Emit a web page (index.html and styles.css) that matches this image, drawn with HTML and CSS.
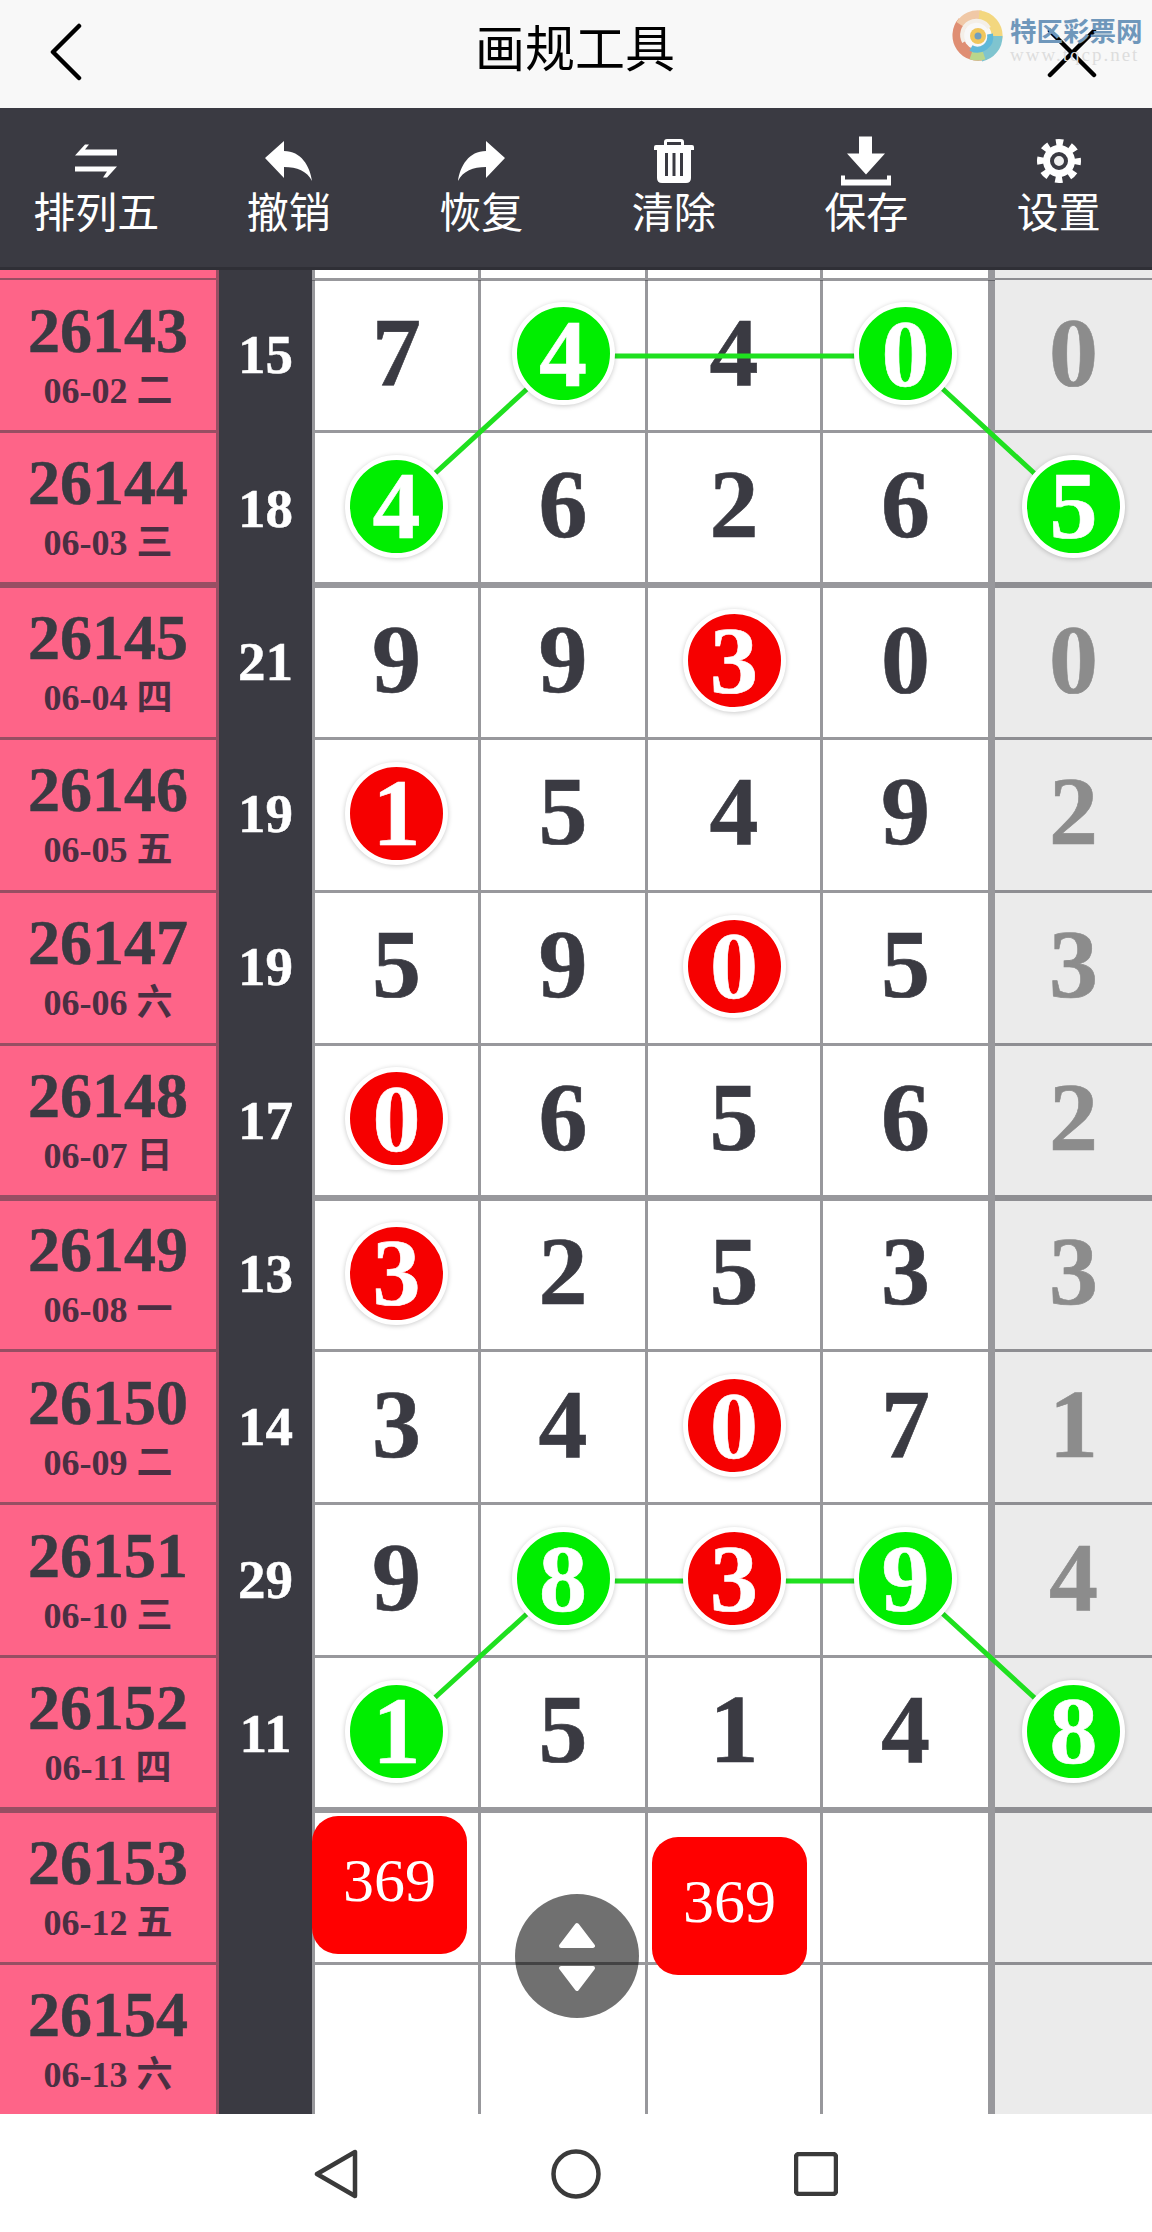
FILE: index.html
```html
<!DOCTYPE html>
<html lang="zh-CN">
<head>
  <meta charset="UTF-8" />
  <meta name="viewport" content="width=device-width, initial-scale=1.0"/>
  <title>画规工具</title>
  <link rel="stylesheet" href="styles.css">
</head>
<body>
  <header class="topbar">
    <svg class="back" width="34" height="58" viewBox="0 0 34 58"><path d="M30 3 L4 29 L30 55" /></svg>
    <h1>画规工具</h1>
    <svg class="close" width="50" height="50" viewBox="0 0 50 50"><path d="M3 3 L47 47 M47 3 L3 47" /></svg>
    <div class="mark">
      <svg class="swirl" width="52" height="52" viewBox="0 0 52 52">
        <g fill="none">
          <path d="M34 44 A20 20 0 0 1 12 12" stroke="#df8e73" stroke-width="11"/>
          <path d="M10 15 A20 20 0 0 1 30 6" stroke="#f0c8a6" stroke-width="11"/>
          <path d="M28 6 A20 20 0 0 1 46 28" stroke="#f3d77f" stroke-width="11"/>
          <path d="M46 26 A20 20 0 0 1 30 46" stroke="#7fc4cf" stroke-width="11"/>
          <path d="M33 45 A20 20 0 0 1 20 45" stroke="#b9d68c" stroke-width="9"/>
          <path d="M13 32 A14 14 0 0 1 38 18" stroke="#f4efe8" stroke-width="4"/>
          <path d="M39 24 A13 13 0 0 1 20 38" stroke="#5fb8d8" stroke-width="6"/>
        </g>
        <circle cx="27" cy="26" r="8" fill="#f0c65c"/>
        <circle cx="27" cy="26" r="3.500" fill="#6f9fc0"/>
      </svg>
      <div class="mark-text">
        <div class="mark-name">特区彩票网</div>
        <div class="mark-url">www.tqcp.net</div>
      </div>
    </div>
  </header>

  <nav class="toolbar">
    <div class="tool">
      <svg width="42" height="33" viewBox="0 0 42 33"><path d="M0 11 L10 0 L14 0 L10 5 L42 5 L42 11 Z M0 22 L42 22 L32 33 L28 33 L32 27 L0 27 Z" /></svg>
      <span>排列五</span>
    </div>
    <div class="tool">
      <svg width="47" height="40" viewBox="0 0 47 40"><path d="M0 17 L19 0 L19 10 C36 10 45 25 47 40 C42 30 32 26 19 26 L19 37 Z" /></svg>
      <span>撤销</span>
    </div>
    <div class="tool">
      <svg width="47" height="40" viewBox="0 0 47 40"><path d="M47 17 L28 0 L28 10 C11 10 2 25 0 40 C5 30 15 26 28 26 L28 37 Z" /></svg>
      <span>恢复</span>
    </div>
    <div class="tool">
      <svg width="42" height="44" viewBox="0 0 42 44">
        <path fill-rule="evenodd" d="M11 6 L11 3 Q11 0 14 0 L28 0 Q31 0 31 3 L31 6 L39 6 Q41 6 41 8 L41 11 L38 11 L38 39 Q38 44 33 44 L9 44 Q4 44 4 39 L4 11 L1 11 L1 8 Q1 6 3 6 Z M14 6 L28 6 L28 3 L14 3 Z M12 14 L12 37 L15 37 L15 14 Z M19.500 14 L19.500 37 L22.500 37 L22.500 14 Z M27 14 L27 37 L30 37 L30 14 Z" />
      </svg>
      <span>清除</span>
    </div>
    <div class="tool">
      <svg width="50" height="49" viewBox="0 0 50 49"><path d="M18 0 L31 0 L31 17 L44 17 L25 38 L6 17 L18 17 Z M0 39 L4 39 L4 43 L46 43 L46 39 L50 39 L50 49 L0 49 Z" /></svg>
      <span>保存</span>
    </div>
    <div class="tool">
      <svg class="gear" width="44" height="44" viewBox="0 0 44 44">
        <circle class="gear-teeth" cx="22" cy="22" r="18" />
        <circle class="gear-body" cx="22" cy="22" r="16" />
        <circle class="gear-ring" cx="22" cy="22" r="7" />
      </svg>
      <span>设置</span>
    </div>
  </nav>

  <main class="board">
    <div class="row cut">
      <div class="date"></div><div class="sum"></div><div class="num first"></div><div class="num"></div><div class="num"></div><div class="num fourth"></div><div class="num last"></div>
    </div>

    <div class="row">
      <div class="date"><b>26143</b><small>06-02 二</small></div>
      <div class="sum">15</div>
      <div class="num first">7</div>
      <div class="num"><i class="ball green">4</i></div>
      <div class="num">4</div>
      <div class="num fourth"><i class="ball green">0</i></div>
      <div class="num last">0</div>
    </div>
    <div class="row major">
      <div class="date"><b>26144</b><small>06-03 三</small></div>
      <div class="sum">18</div>
      <div class="num first"><i class="ball green">4</i></div>
      <div class="num">6</div>
      <div class="num">2</div>
      <div class="num fourth">6</div>
      <div class="num last"><i class="ball green">5</i></div>
    </div>
    <div class="row">
      <div class="date"><b>26145</b><small>06-04 四</small></div>
      <div class="sum">21</div>
      <div class="num first">9</div>
      <div class="num">9</div>
      <div class="num"><i class="ball red">3</i></div>
      <div class="num fourth">0</div>
      <div class="num last">0</div>
    </div>
    <div class="row">
      <div class="date"><b>26146</b><small>06-05 五</small></div>
      <div class="sum">19</div>
      <div class="num first"><i class="ball red">1</i></div>
      <div class="num">5</div>
      <div class="num">4</div>
      <div class="num fourth">9</div>
      <div class="num last">2</div>
    </div>
    <div class="row">
      <div class="date"><b>26147</b><small>06-06 六</small></div>
      <div class="sum">19</div>
      <div class="num first">5</div>
      <div class="num">9</div>
      <div class="num"><i class="ball red">0</i></div>
      <div class="num fourth">5</div>
      <div class="num last">3</div>
    </div>
    <div class="row major">
      <div class="date"><b>26148</b><small>06-07 日</small></div>
      <div class="sum">17</div>
      <div class="num first"><i class="ball red">0</i></div>
      <div class="num">6</div>
      <div class="num">5</div>
      <div class="num fourth">6</div>
      <div class="num last">2</div>
    </div>
    <div class="row">
      <div class="date"><b>26149</b><small>06-08 一</small></div>
      <div class="sum">13</div>
      <div class="num first"><i class="ball red">3</i></div>
      <div class="num">2</div>
      <div class="num">5</div>
      <div class="num fourth">3</div>
      <div class="num last">3</div>
    </div>
    <div class="row">
      <div class="date"><b>26150</b><small>06-09 二</small></div>
      <div class="sum">14</div>
      <div class="num first">3</div>
      <div class="num">4</div>
      <div class="num"><i class="ball red">0</i></div>
      <div class="num fourth">7</div>
      <div class="num last">1</div>
    </div>
    <div class="row">
      <div class="date"><b>26151</b><small>06-10 三</small></div>
      <div class="sum">29</div>
      <div class="num first">9</div>
      <div class="num"><i class="ball green">8</i></div>
      <div class="num"><i class="ball red">3</i></div>
      <div class="num fourth"><i class="ball green">9</i></div>
      <div class="num last">4</div>
    </div>
    <div class="row major">
      <div class="date"><b>26152</b><small>06-11 四</small></div>
      <div class="sum">11</div>
      <div class="num first"><i class="ball green">1</i></div>
      <div class="num">5</div>
      <div class="num">1</div>
      <div class="num fourth">4</div>
      <div class="num last"><i class="ball green">8</i></div>
    </div>
    <div class="row">
      <div class="date"><b>26153</b><small>06-12 五</small></div>
      <div class="sum"></div>
      <div class="num first"></div>
      <div class="num"></div>
      <div class="num"></div>
      <div class="num fourth"></div>
      <div class="num last"></div>
    </div>
    <div class="row">
      <div class="date"><b>26154</b><small>06-13 六</small></div>
      <div class="sum"></div>
      <div class="num first"></div>
      <div class="num"></div>
      <div class="num"></div>
      <div class="num fourth"></div>
      <div class="num last"></div>
    </div>

    <svg class="links" width="1152" height="1844" viewBox="0 0 1152 1844">
      <polyline points="396,239 563,86 907,86 1073,239" />
      <polyline points="396,1463 563,1311 907,1311 1073,1463" />
    </svg>

    <div class="tag tag-a">369</div>
    <div class="tag tag-b">369</div>

    <div class="float">
      <svg width="40" height="70" viewBox="0 0 40 70">
        <path d="M20 4 L36 25 L4 25 Z M4 47 L36 47 L20 68 Z" />
      </svg>
    </div>
  </main>

  <footer class="sysnav">
    <svg width="44" height="50" viewBox="0 0 44 50"><path d="M41 3 L41 47 L3 25 Z" /></svg>
    <svg width="50" height="50" viewBox="0 0 50 50"><circle cx="25" cy="25" r="22.500" /></svg>
    <svg width="44" height="44" viewBox="0 0 44 44"><rect x="2" y="2" width="40" height="40" rx="3" /></svg>
  </footer>
</body>
</html>
```

FILE: styles.css
```css
:root {
  --dark: #3a3a42;
  --line: rgba(58, 58, 66, 0.52);
}

* {
  box-sizing: border-box;
}

body {
  margin: 0;
  width: 1152px;
  height: 2232px;
  overflow: hidden;
  background: #fff;
  font-family: "Liberation Serif", "Noto Sans CJK SC", serif;
}

.topbar {
  position: relative;
  height: 108px;
  padding: 0 55px 0 49px;
  display: flex;
  justify-content: space-between;
  align-items: center;
  background: #f8f8f8;
}

.topbar h1 {
  margin: 0 0 19px 20px;
  font: 400 50px/64px "Noto Sans CJK SC", sans-serif;
  color: #000;
}

.back path,
.close path {
  fill: none;
  stroke: #000;
  stroke-width: 4.500;
  stroke-linecap: round;
  stroke-linejoin: round;
}

.back {
  margin-bottom: 4px;
}

.close {
  margin-bottom: 2px;
}

.mark {
  position: absolute;
  top: 10px;
  left: 951px;
  display: flex;
  gap: 7px;
  pointer-events: none;
}

.swirl {
  filter: blur(0.6px);
}

.mark-text {
  padding-top: 6px;
}

.mark-name {
  font: 700 26.500px/28px "Noto Sans CJK SC", sans-serif;
  color: #6f97bb;
}

.mark-url {
  margin-top: 1px;
  font: 400 19px/20px "Liberation Serif", serif;
  letter-spacing: 2px;
  color: #dddddd;
}

.toolbar {
  height: 162px;
  padding-top: 28px;
  display: grid;
  grid-template-columns: repeat(6, 192.500px);
  background: var(--dark);
  border-bottom: 3px solid #2f2f36;
}

.tool {
  display: flex;
  flex-direction: column;
  align-items: center;
  color: #fff;
  font: 400 42px/48px "Noto Sans CJK SC", sans-serif;
}

.tool svg {
  height: 50px;
  fill: #fff;
}

.gear-teeth {
  fill: none;
  stroke: #fff;
  stroke-width: 8;
  stroke-dasharray: 7 7.137;
  stroke-dashoffset: 3.500;
}

.gear-body {
  fill: #fff;
}

.gear-ring {
  fill: #f0f0f0;
  stroke: var(--dark);
  stroke-width: 4;
}

.board {
  position: relative;
  height: 1844px;
  overflow: hidden;
}

.row {
  height: 153.125px;
  display: grid;
  grid-template-columns: 219px 93px 169px 167px 175px 172px 157px;
}

.row.cut {
  height: 10.250px;
}

.row.major {
  height: 154.625px;
}

.row.major + .row {
  height: 151.625px;
}

.date,
.num {
  border-bottom: 3px solid var(--line);
}

.row.major .date,
.row.major .num {
  border-bottom-width: 6px;
}

.date {
  padding-top: 8px;
  display: flex;
  flex-direction: column;
  align-items: center;
  justify-content: center;
  background: #fe6488;
  border-right: 3px solid var(--line);
  color: var(--dark);
}

.date b {
  margin-top: -2px;
  font-size: 64px;
  line-height: 64px;
  -webkit-text-stroke: 0.5px var(--dark);
}

.date small {
  margin-top: 1px;
  font-size: 36px;
  line-height: 54px;
  font-weight: 700;
  color: #4a2f42;
}

.sum {
  padding-bottom: 5px;
  display: flex;
  align-items: center;
  justify-content: center;
  background: var(--dark);
  color: #fff;
  font-size: 55px;
  font-weight: 700;
  -webkit-text-stroke: 0.5px #fff;
}

.num {
  padding-bottom: 7px;
  display: flex;
  align-items: center;
  justify-content: center;
  border-right: 3px solid var(--line);
  color: var(--dark);
  font-size: 98px;
  font-weight: 700;
  line-height: 1;
  -webkit-text-stroke: 0.6px currentColor;
}

.num.first {
  border-left: 3px solid var(--line);
}

.num.fourth {
  border-right-width: 7px;
}

.num.last {
  background: #ebebeb;
  border-right: 0;
  color: #8c8c8c;
}

.ball {
  position: relative;
  z-index: 2;
  width: 103px;
  height: 103px;
  margin-top: 4px;
  flex: none;
  display: flex;
  align-items: center;
  justify-content: center;
  border: 5px solid #fff;
  border-radius: 50%;
  box-shadow: 0 1px 5px rgba(0, 0, 0, 0.22);
  color: #fff;
  font-style: normal;
  font-size: 96px;
}

.ball.green {
  background: #00ee00;
}

.ball.red {
  background: #f60000;
}

.links {
  position: absolute;
  top: 0;
  left: 0;
  z-index: 1;
  pointer-events: none;
}

.links polyline {
  fill: none;
  stroke: #1fe01f;
  stroke-width: 5;
}

.tag {
  position: absolute;
  z-index: 3;
  width: 155px;
  height: 138px;
  padding-bottom: 9px;
  display: flex;
  align-items: center;
  justify-content: center;
  background: #ff0000;
  border-radius: 26px;
  color: #fff;
  font-size: 62px;
}

.tag-a {
  top: 1546px;
  left: 312px;
}

.tag-b {
  top: 1567px;
  left: 652px;
}

.float {
  position: absolute;
  z-index: 4;
  top: 1624px;
  left: 515px;
  width: 124px;
  height: 124px;
  display: flex;
  align-items: center;
  justify-content: center;
  border-radius: 50%;
  background: rgba(0, 0, 0, 0.56);
}

.float path {
  fill: #fff;
  stroke: #fff;
  stroke-width: 4;
  stroke-linejoin: round;
}

.sysnav {
  height: 118px;
  padding: 2px 314px 0;
  display: flex;
  align-items: center;
  justify-content: space-between;
}

.sysnav svg * {
  fill: none;
  stroke: #3a3a3a;
  stroke-width: 4.500;
  stroke-linejoin: round;
}
```
